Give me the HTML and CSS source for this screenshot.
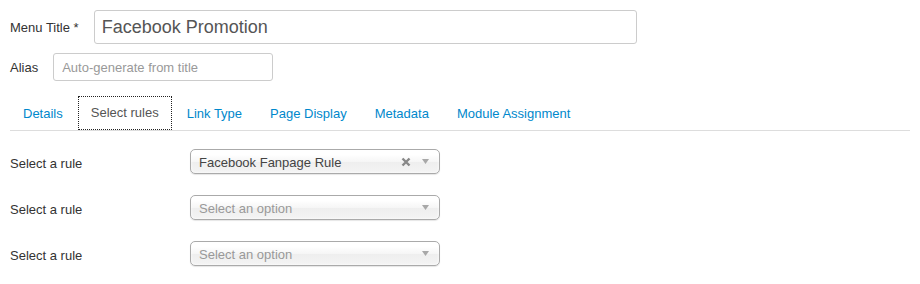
FILE: index.html
```html
<!DOCTYPE html>
<html lang="en">
<head>
<meta charset="UTF-8">
<title>Menu Item</title>
<link rel="stylesheet" href="styles.css">
</head>
<body>

<div class="title-row">
  <label for="title">Menu Title *</label>
  <input type="text" id="title" class="input-title" value="Facebook Promotion">
</div>

<div class="alias-row">
  <label for="alias">Alias</label>
  <input type="text" id="alias" class="input-alias" placeholder="Auto-generate from title">
</div>

<ul class="nav-tabs">
  <li><a href="#">Details</a></li>
  <li class="active"><a href="#">Select rules</a></li>
  <li><a href="#">Link Type</a></li>
  <li><a href="#">Page Display</a></li>
  <li><a href="#">Metadata</a></li>
  <li><a href="#">Module Assignment</a></li>
</ul>

<div class="rules">
  <div class="control-group">
    <div class="control-label">Select a rule</div>
    <div class="chosen">
      <span class="chosen-text">Facebook Fanpage Rule</span>
      <svg class="chosen-clear" width="10" height="10" viewBox="0 0 10 10"><path d="M1.5 1.5L8.5 8.5M8.5 1.5L1.5 8.5" stroke="#888" stroke-width="2.4"/></svg>
      <svg class="chosen-arrow" width="7" height="5" viewBox="0 0 7 5"><path d="M0 0H7L3.5 5Z" fill="#a8a8a8"/></svg>
    </div>
  </div>
  <div class="control-group">
    <div class="control-label">Select a rule</div>
    <div class="chosen">
      <span class="chosen-text placeholder">Select an option</span>
      <svg class="chosen-arrow" width="7" height="5" viewBox="0 0 7 5"><path d="M0 0H7L3.5 5Z" fill="#a8a8a8"/></svg>
    </div>
  </div>
  <div class="control-group">
    <div class="control-label">Select a rule</div>
    <div class="chosen">
      <span class="chosen-text placeholder">Select an option</span>
      <svg class="chosen-arrow" width="7" height="5" viewBox="0 0 7 5"><path d="M0 0H7L3.5 5Z" fill="#a8a8a8"/></svg>
    </div>
  </div>
</div>

</body>
</html>
```

FILE: styles.css
```css
body {
  font-family: "Liberation Sans", Arial, sans-serif;
  font-size: 13px;
  color: #333;
  margin: 0;
  padding: 10px;
  background: #fff;
}
input {
  font-family: "Liberation Sans", Arial, sans-serif;
  box-sizing: border-box;
  border: 1px solid #ccc;
  border-radius: 3px;
  color: #555;
  margin: 0;
}
input::placeholder {
  color: #999;
}
.title-row, .alias-row {
  display: flex;
  align-items: center;
}
.title-row label, .alias-row label {
  margin-right: 15px;
}
.input-title {
  width: 543px;
  height: 34px;
  font-size: 18px;
  padding: 0 7px;
}
.alias-row {
  margin-top: 9px;
}
.input-alias {
  width: 220px;
  height: 28px;
  font-size: 13px;
  padding: 0 8px;
}
.nav-tabs {
  list-style: none;
  margin: 15px 0 0;
  padding: 0;
  display: flex;
  border-bottom: 1px solid #ddd;
}
.nav-tabs li {
  margin-right: 2px;
}
.nav-tabs a {
  display: block;
  padding: 0 12px;
  height: 34px;
  line-height: 34px;
  box-sizing: border-box;
  border: 1px solid transparent;
  color: #0088cc;
  text-decoration: none;
}
.nav-tabs .active a {
  color: #555;
  border: 1px dotted #222;
  line-height: 32px;
}
.rules {
  padding-top: 18px;
}
.control-group {
  display: flex;
  align-items: center;
  margin-bottom: 21px;
}
.control-label {
  width: 180px;
  padding-top: 3px;
}
.chosen {
  width: 250px;
  height: 25px;
  box-sizing: border-box;
  border: 1px solid #aaa;
  border-radius: 5px;
  background: linear-gradient(#fff 20%, #f6f6f6 50%, #eee 52%, #f4f4f4 100%);
  box-shadow: 0 0 3px #fff inset, 0 1px 1px rgba(0, 0, 0, 0.1);
  display: flex;
  align-items: center;
  padding: 0 10px 0 8px;
  color: #444;
}
.chosen-text {
  flex: 1;
  padding-top: 2px;
}
.chosen-text.placeholder {
  color: #999;
}
.chosen-clear {
  margin-right: 11px;
}
```
